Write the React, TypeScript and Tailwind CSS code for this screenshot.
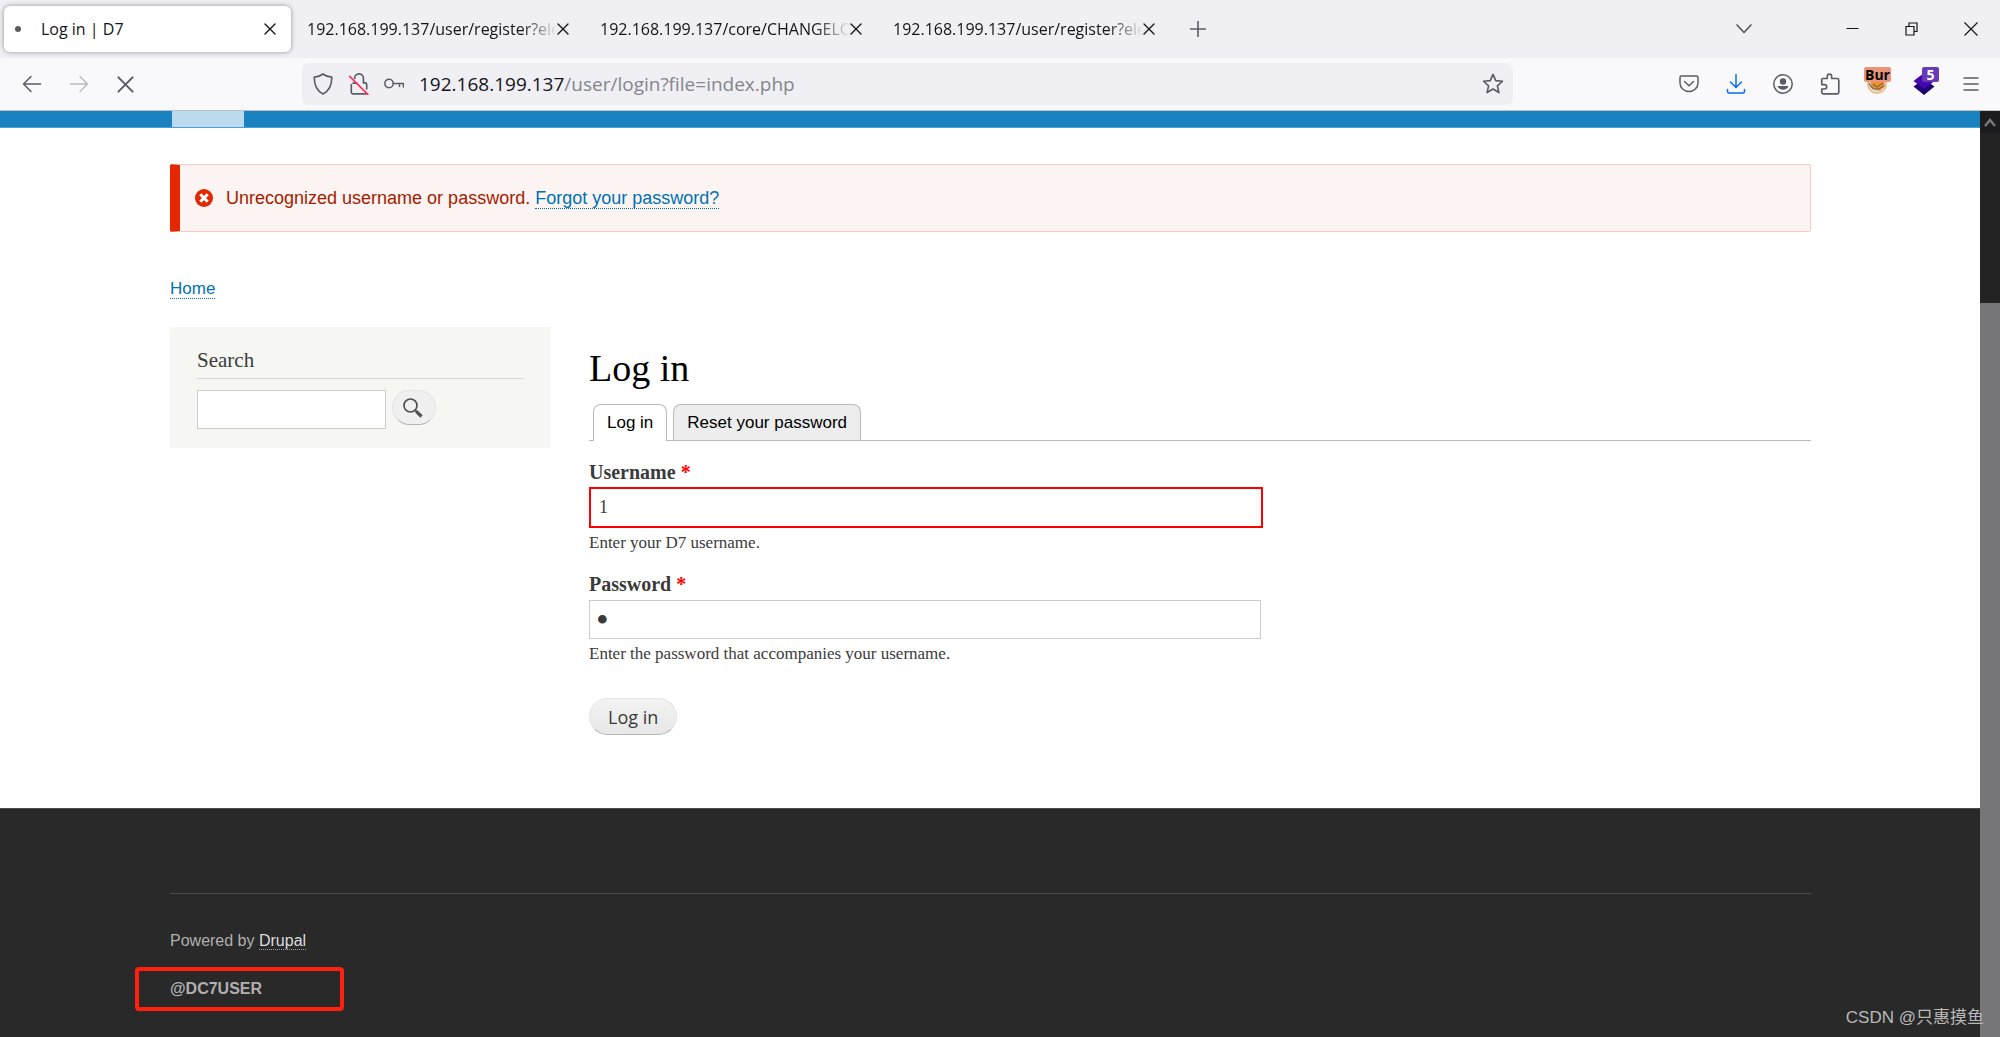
import React from 'react';

const tabs = [
  { id: 1, title: 'Log in | D7', active: true },
  { id: 2, title: '192.168.199.137/user/register?ele' },
  { id: 3, title: '192.168.199.137/core/CHANGELO' },
  { id: 4, title: '192.168.199.137/user/register?ele' },
];

interface IconProps {
  className?: string;
  children: React.ReactNode;
  size?: number;
}

const Icon: React.FC<IconProps> = ({ className = '', children, size = 20 }) => (
  <svg
    width={size}
    height={size}
    viewBox="0 0 20 20"
    fill="none"
    stroke="currentColor"
    strokeWidth="1.5"
    strokeLinecap="round"
    strokeLinejoin="round"
    className={`shrink-0 ${className}`}
    aria-hidden="true"
  >
    {children}
  </svg>
);

const CrossIcon = ({ size = 12 }: { size?: number }) => (
  <svg width={size} height={size} viewBox="0 0 12 12" stroke="currentColor" strokeWidth="1.4" strokeLinecap="round" aria-hidden="true">
    <path d="M1 1l10 10M11 1L1 11" />
  </svg>
);

const TabStrip = () => (
  <div className="flex h-[58px] items-center bg-[#f0f0f4] text-[#15141a]">
    {tabs.map((tab) => (
      <div key={tab.id} className="h-full w-[293px] shrink-0 py-[6px] pr-[2px] pl-1">
        <div
          className={`flex h-full items-center rounded-md pr-[15px] ${
            tab.active ? 'bg-white pl-[11px] shadow-[0_0_5px_rgba(0,0,0,0.4)]' : 'pl-[10px]'
          }`}
        >
          {tab.active && <span className="mr-5 size-[6px] shrink-0 rounded-full bg-[#5b5b66]" />}
          <span
            className={`flex-1 overflow-hidden text-base whitespace-nowrap ${
              tab.active ? '' : '[mask-image:linear-gradient(to_right,#000_86%,transparent)]'
            }`}
          >
            {tab.title}
          </span>
          <button aria-label="Close tab" className="shrink-0">
            <CrossIcon />
          </button>
        </div>
      </div>
    ))}
    <button aria-label="New tab" className="ml-[18px] text-[#5b5b66]">
      <svg width="16" height="16" viewBox="0 0 16 16" stroke="currentColor" strokeWidth="1.6" aria-hidden="true">
        <path d="M8 0v16M0 8h16" />
      </svg>
    </button>
    <div className="ml-auto flex items-center">
      <button aria-label="List all tabs" className="mr-[55px] flex w-12 justify-center text-[#5b5b66]">
        <svg width="16" height="10" viewBox="0 0 16 10" fill="none" stroke="currentColor" strokeWidth="1.7" strokeLinecap="round" strokeLinejoin="round" aria-hidden="true">
          <path d="M1 1l7 7.500 7-7.500" />
        </svg>
      </button>
      <button aria-label="Minimize" className="flex w-[59px] justify-center">
        <svg width="13" height="14" viewBox="0 0 13 14" stroke="currentColor" aria-hidden="true">
          <path d="M0.500 6.500h12" />
        </svg>
      </button>
      <button aria-label="Restore" className="flex w-[59px] justify-center">
        <svg width="13" height="14" viewBox="0 0 13 14" fill="none" stroke="currentColor" strokeWidth="1.2" aria-hidden="true">
          <path d="M1 4.500h8v8.500H1zM4 4.500V1h8v8.500H9" />
        </svg>
      </button>
      <button aria-label="Close window" className="flex w-[59px] justify-center">
        <svg width="14" height="14" viewBox="0 0 14 14" stroke="currentColor" strokeWidth="1.2" aria-hidden="true">
          <path d="M0.500 0.500l13 13M13.500 0.500l-13 13" />
        </svg>
      </button>
    </div>
  </div>
);

const Toolbar = () => (
  <div className="flex h-[53px] items-center border-b border-[#c0c0c4] bg-[#f9f9fb] text-[#5b5b66]">
    <div className="flex w-[302px] shrink-0 items-center pl-2">
      <button aria-label="Back" className="flex w-[47px] justify-center">
        <Icon>
          <path d="M1.500 10h17M9 2.500L1.500 10 9 17.500" />
        </Icon>
      </button>
      <button aria-label="Forward" disabled className="flex w-[47px] justify-center text-[#bcbcc1]">
        <Icon>
          <path d="M18.500 10h-17M11 2.500l7.500 7.500-7.500 7.500" />
        </Icon>
      </button>
      <button aria-label="Stop" className="flex w-[47px] justify-center">
        <CrossIcon size={17} />
      </button>
    </div>
    <div className="flex h-[42px] flex-1 items-center rounded-md bg-[#f0f0f4] pr-[9px] pl-[10px]">
      <Icon size={22} className="mr-[14px]">
        <path d="M10 0.900c2.300 1.900 4.900 2.600 8 2.900 0 6.500-1.500 12-8 15.200C3.500 15.800 2 10.300 2 3.800c3.100-.3 5.700-1 8-2.900z" />
      </Icon>
      <Icon size={22} className="mr-[14px]">
        <path d="M6 5V4.800a4 4 0 0 1 8 0V9h1.500a1.500 1.500 0 0 1 1.500 1.500v4M3 10.500v7A1.500 1.500 0 0 0 4.500 19h12M4.500 9.200h3.500" />
        <path d="M1.500 3l16.500 16.500" stroke="#ff2f5b" />
      </Icon>
      <Icon className="mr-[15px]">
        <circle cx="5" cy="9.500" r="4.200" />
        <path d="M9.200 9.500h10.200v3.500M15.500 9.500v3" />
      </Icon>
      <div className="flex-1 text-[19px]">
        <span className="text-[#15141a]">192.168.199.137</span>
        <span className="text-[#85858c]">/user/login?file=index.php</span>
      </div>
      <button aria-label="Bookmark this page">
        <Icon size={22}>
          <path d="M10 1.300l2.500 5.600 6.100.6-4.600 4.100 1.400 6.200-5.400-3.200-5.400 3.200L6 11.600 1.400 7.500l6.100-.6z" />
        </Icon>
      </button>
    </div>
    <div className="flex w-[487px] shrink-0 items-center justify-end pr-[6px]">
      <button aria-label="Save to Pocket" className="flex w-[47px] justify-center">
        <Icon>
          <path d="M2.500 2h15a1.500 1.500 0 0 1 1.500 1.500V9a9 8.500 0 0 1-18 0V3.500A1.500 1.500 0 0 1 2.500 2zM5.500 7.500L10 11.700l4.500-4.200" />
        </Icon>
      </button>
      <button aria-label="Downloads" className="flex w-[47px] justify-center text-[#0a6cf0]">
        <Icon>
          <path d="M10 0v13M4.500 8L10 13.500 15.500 8M1.500 15.500v2A1.500 1.500 0 0 0 3 19h14a1.500 1.500 0 0 0 1.500-1.500v-2" />
        </Icon>
      </button>
      <button aria-label="Account" className="flex w-[47px] justify-center">
        <Icon>
          <circle cx="10" cy="10" r="9.200" />
          <circle cx="10" cy="7.500" r="3.200" fill="currentColor" stroke="none" />
          <path d="M4.500 12h11c-.8 2.500-3 3.700-5.500 3.700S5.300 14.500 4.500 12z" fill="currentColor" stroke="none" />
        </Icon>
      </button>
      <button aria-label="Extensions" className="flex w-[47px] justify-center">
        <Icon size={22}>
          <path d="M2.500 8V6a1 1 0 0 1 1-1H7.500V3a2 2 0 0 1 4 0v2h5a1.500 1.500 0 0 1 1.500 1.500V17.500a1.500 1.500 0 0 1-1.500 1.500H4a1.500 1.500 0 0 1-1.500-1.500V14.500H5a2 2 0 0 0 0-4H2.500z" />
        </Icon>
      </button>
      <button aria-label="Burp" className="relative flex w-[47px] justify-center">
        <svg width="22" height="26" viewBox="0 0 22 26" aria-hidden="true">
          <circle cx="11" cy="13" r="10" fill="#f3b77f" />
          <circle cx="11" cy="13" r="8.500" fill="#e2e0dc" />
          <path d="M4 8l14 1 1 6-5 5-8-2z" fill="#f0922c" />
          <path d="M3 12c3 8 9 7 15 3M7 13l4 3 6-4" fill="none" stroke="#77695c" strokeWidth="1.200" />
        </svg>
        <span className="absolute -top-1 left-[11px] rounded-xs bg-[#eb9479] px-px text-sm leading-[15px] font-bold text-black">Bur</span>
      </button>
      <button aria-label="Layers" className="relative flex w-[47px] justify-center">
        <svg width="22" height="26" viewBox="0 0 22 26" aria-hidden="true">
          <path d="M0.500 15.500L11 8l10.500 7.500L11 24z" fill="#1e0074" />
          <path d="M0.500 10L11 2l10.500 8L11 18z" fill="#4507b0" />
        </svg>
        <span className="absolute -top-1 left-[22px] w-[17px] rounded-xs bg-[#673ab7] text-center text-sm leading-[15px] font-bold text-white">5</span>
      </button>
      <button aria-label="Menu" className="flex w-[47px] justify-center">
        <svg width="16" height="14" viewBox="0 0 16 14" stroke="currentColor" strokeWidth="1.500" strokeLinecap="round" aria-hidden="true">
          <path d="M1 1h14M1 7h14M1 13h14" />
        </svg>
      </button>
    </div>
  </div>
);

const SearchBlock = () => (
  <aside className="w-[381px] shrink-0 self-start bg-[#f6f6f2] px-[27px] pt-[18px] pb-[19px]">
    <h2 className="border-b border-[#d6d6d6] pb-[3px] font-['Liberation_Serif',serif] text-[21px] leading-[30px] text-[#3b3b3b]">Search</h2>
    <form className="flex items-start gap-[6px] pt-[11px]" onSubmit={(e) => e.preventDefault()}>
      <input type="search" aria-label="Search" className="h-[39px] w-[189px] border border-[#ccc] bg-white px-2" />
      <button
        type="submit"
        aria-label="Search"
        className="flex h-[35px] w-11 items-center justify-center rounded-full border border-[#e4e4e4] border-b-[#b4b4b4] bg-[#f0f0f0] pr-[2px]"
      >
        <svg width="20" height="20" viewBox="0 0 20 20" fill="none" stroke="#505050" aria-hidden="true">
          <circle cx="7.500" cy="7.500" r="6.500" strokeWidth="1.700" />
          <path d="M12 12l2 2" strokeWidth="2" />
          <path d="M13.300 13.300l5.200 5.200" strokeWidth="3.200" />
        </svg>
      </button>
    </form>
  </aside>
);

const LoginForm = () => (
  <form className="pt-4 font-['Liberation_Serif',serif] text-[#3b3b3b]" onSubmit={(e) => e.preventDefault()}>
    <label htmlFor="username" className="block text-xl leading-[30px] font-bold">
      Username <span className="text-[#ff0000]">*</span>
    </label>
    <input
      id="username"
      type="text"
      defaultValue="1"
      className="block h-[41px] w-[calc(55%+2px)] border-2 border-[#ff0000] px-2 text-lg outline-none"
    />
    <p className="pt-1 text-[17px] leading-[22px]">Enter your D7 username.</p>

    <label htmlFor="password" className="block pt-[15px] text-xl leading-[30px] font-bold">
      Password <span className="text-[#ff0000]">*</span>
    </label>
    <input
      id="password"
      type="password"
      defaultValue="1"
      className="mt-px block h-[39px] w-[55%] border border-[#ccc] px-[6px] text-4xl outline-none"
    />
    <p className="pt-1 text-[17px] leading-[22px]">Enter the password that accompanies your username.</p>

    <button
      type="submit"
      className="mt-[33px] h-[37px] rounded-full border border-[#e4e4e4] border-b-[#b4b4b4] bg-linear-to-b from-[#f3f3f3] to-[#e7e7e7] px-[18px] font-['Open_Sans',sans-serif] text-lg text-[#3a3a3a]"
    >
      Log in
    </button>
  </form>
);

export default function App() {
  return (
    <div className="relative flex min-h-screen flex-col bg-white font-['Open_Sans','Noto_Sans',sans-serif]">
      <TabStrip />
      <Toolbar />
      <div className="flex flex-1">
        <div className="flex flex-1 flex-col font-['Liberation_Sans',Arial,sans-serif]">
          <div className="h-[17px] border-b border-[#48a0d4] bg-[#1b82c1] pl-[172px]">
            <div className="h-4 w-[72px] bg-[#bbdaed]" />
          </div>

          <main className="pt-9 pr-[169px] pb-[73px] pl-[170px]">
            <div role="alert" className="flex h-[68px] items-center rounded-xs border border-l-10 border-[#f9c9bf] border-l-[#e62600] bg-[#fcf4f2] pl-[15px] text-lg text-[#a51b00]">
              <svg width="18" height="18" viewBox="0 0 18 18" className="mr-[13px]" aria-hidden="true">
                <circle cx="9" cy="9" r="9" fill="#e32700" />
                <path d="M5.300 5.300l7.400 7.400M12.700 5.300l-7.400 7.400" stroke="#fff" strokeWidth="3" />
              </svg>
              <p>
                Unrecognized username or password.{' '}
                <a href="#" className="border-b border-dotted border-[#0071b3] text-[#0071b3]">Forgot your password?</a>
              </p>
            </div>

            <nav aria-label="Breadcrumb" className="pt-[45px] pb-[26px] text-[17px] leading-6">
              <a href="#" className="border-b border-dotted border-[#0071b3] text-[#0071b3]">Home</a>
            </nav>

            <div className="flex gap-[38px]">
              <SearchBlock />
              <section className="min-w-0 flex-1 pt-[19px]">
                <h1 className="font-['Liberation_Serif',serif] text-[38px] leading-[44px] text-black">Log in</h1>
                <div className="mt-[14px] flex gap-[6px] border-b border-[#bbb] pl-1 text-[17px] text-black">
                  <a href="#" className="-mb-px flex h-[37px] items-center rounded-t-lg border border-b-0 border-[#bbb] bg-white px-[13px]">
                    Log in
                  </a>
                  <a href="#" className="flex h-9 items-center rounded-t-lg border border-b-0 border-[#bbb] bg-[#ededed] px-[13px]">
                    Reset your password
                  </a>
                </div>
                <LoginForm />
              </section>
            </div>
          </main>

          <footer className="flex-1 border-t border-[#4a4a4a] bg-[#292929] pt-21 pr-[169px] pl-[170px] text-base leading-6 text-[#b0b0b0]">
            <div className="border-t border-[#4c4c4c] pt-[35px]">
              <p>
                Powered by{' '}
                <a href="#" className="border-b border-dotted border-[#a0a0a0] text-[#dcdcdc]">Drupal</a>
              </p>
              <p className="relative mt-6 font-bold">
                @DC7USER
                <span className="absolute -top-[10px] -left-[35px] h-[44px] w-[209px] rounded-sm border-4 border-[#ff2010]" />
              </p>
            </div>
          </footer>
        </div>

        <div className="flex w-5 shrink-0 flex-col bg-[#77777a]" aria-hidden="true">
          <div className="h-48 bg-[#232324]">
            <div className="flex h-[22px] items-center justify-center bg-[#1c1c1e]">
              <svg width="12" height="9" viewBox="0 0 12 9" fill="none" stroke="#77777a" strokeWidth="2.500">
                <path d="M1 8l5-6 5 6" />
              </svg>
            </div>
          </div>
        </div>
      </div>

      <span className="absolute right-4 bottom-[7px] font-['Liberation_Sans','Noto_Sans_CJK_SC',sans-serif] text-[17px] leading-6 text-[#b9b9b9]">
        CSDN @只惠摸鱼
      </span>
    </div>
  );
}
